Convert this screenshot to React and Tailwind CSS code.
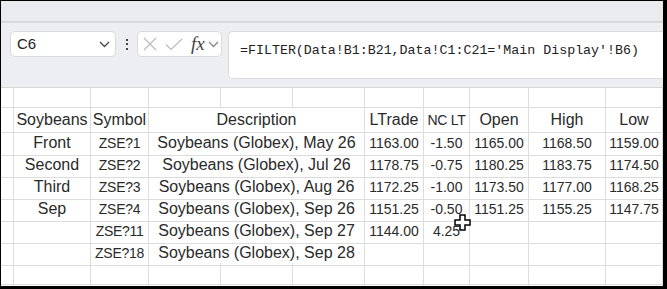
const cols = 'grid grid-cols-[13px_77px_58px_72px_72px_72px_59px_46px_59px_77px_57px]'
const cell = 'border-r border-b border-[#dcdcdc] flex items-center justify-center whitespace-nowrap overflow-visible'

const rows = [
    ['Front', 'ZSE?1', 'Soybeans (Globex), May 26', '1163.00', '-1.50', '1165.00', '1168.50', '1159.00'],
    ['Second', 'ZSE?2', 'Soybeans (Globex), Jul 26', '1178.75', '-0.75', '1180.25', '1183.75', '1174.50'],
    ['Third', 'ZSE?3', 'Soybeans (Globex), Aug 26', '1172.25', '-1.00', '1173.50', '1177.00', '1168.25'],
    ['Sep', 'ZSE?4', 'Soybeans (Globex), Sep 26', '1151.25', '-0.50', '1151.25', '1155.25', '1147.75'],
    ['', 'ZSE?11', 'Soybeans (Globex), Sep 27', '1144.00', '4.25', '', '', ''],
    ['', 'ZSE?18', 'Soybeans (Globex), Sep 28', '', '', '', '', ''],
]

const EmptyRow = ({ h }) => (
    <div className={`${cols} ${h}`}>
        {Array.from({ length: 11 }).map((_, i) => (
            <div key={i} className={cell} />
        ))}
    </div>
)

const Chevron = ({ color }) => (
    <svg width="11" height="7" viewBox="0 0 11 7">
        <polyline points="1,1 5.5,5.5 10,1" fill="none" stroke={color} strokeWidth="1.3" />
    </svg>
)

const App = () => {
    return (
        <div className="relative w-[667px] h-[289px] overflow-hidden bg-white border-black border-t border-l border-r-4 border-b-[3px] text-[#2a2a2a] font-['Liberation_Sans',Arial,sans-serif]">
            {/* top band */}
            <div className="h-[22px] bg-[#e9ebee] border-b-2 border-[#d7d9dc]" />

            {/* formula bar */}
            <div className="h-[64px] bg-[#eceef1] pl-[9px] pt-[8px] flex items-start">
                <div className="w-[106px] h-[26px] bg-white border border-[#d9dbde] rounded-[5px] flex items-center justify-between pl-[6px] pr-[5px]">
                    <span className="text-[15px] text-[#222]">C6</span>
                    <Chevron color="#444" />
                </div>
                <div className="w-[21px] h-[26px] flex flex-col items-center justify-center gap-[2.5px]">
                    <span className="w-[2px] h-[2px] bg-[#444]" />
                    <span className="w-[2px] h-[2px] bg-[#444]" />
                    <span className="w-[2px] h-[2px] bg-[#444]" />
                </div>
                <div className="w-[85px] h-[26px] bg-white border border-[#d9dbde] rounded-[5px] flex items-center pl-[5px]">
                    <svg width="14" height="14" viewBox="0 0 14 14">
                        <path d="M1 1 L13 13 M13 1 L1 13" stroke="#bcbcbc" strokeWidth="1.2" />
                    </svg>
                    <svg width="18" height="13" viewBox="0 0 18 13" className="ml-[8px]">
                        <polyline points="1,6.5 6,11.5 17,1" fill="none" stroke="#bcbcbc" strokeWidth="1.2" />
                    </svg>
                    <span className="ml-[8px] text-[19px] italic leading-none text-[#444] font-['Liberation_Serif',serif] mb-[2px]">fx</span>
                    <span className="ml-[3px]"><Chevron color="#888" /></span>
                </div>
                <div className="ml-[6px] flex-1 h-[48px] bg-white border border-r-0 border-[#d9dbde] rounded-l-[5px] pl-[11px] pt-[5px]">
                    <span className="text-[13.3px] leading-[16px] text-[#222] font-['Liberation_Mono',monospace] whitespace-nowrap">
                        =FILTER(Data!B1:B21,Data!C1:C21='Main Display'!B6)
                    </span>
                </div>
            </div>

            {/* sheet */}
            <div className="border-t border-[#d6d6d6]">
                <EmptyRow h="h-[20px]" />
                <div className={`${cols} h-[23px] text-[16px]`}>
                    <div className={cell} />
                    <div className={cell}>Soybeans</div>
                    <div className={cell}>Symbol</div>
                    <div className={`${cell} col-span-3`}>Description</div>
                    <div className={cell}>LTrade</div>
                    <div className={`${cell} text-[14px] tracking-[-0.3px]`}>NC LT</div>
                    <div className={cell}>Open</div>
                    <div className={cell}>High</div>
                    <div className={cell}>Low</div>
                </div>
                {rows.map((r, i) => (
                    <div key={i} className={`${cols} h-[22px]`}>
                        <div className={cell} />
                        <div className={`${cell} text-[16px]`}>{r[0]}</div>
                        <div className={`${cell} text-[14px] tracking-[-0.3px]`}>{r[1]}</div>
                        <div className={`${cell} col-span-3 text-[16px]`}>{r[2]}</div>
                        {r.slice(3).map((v, j) => (
                            <div key={j} className={`${cell} text-[14px]`}>{v}</div>
                        ))}
                    </div>
                ))}
                <EmptyRow h="h-[22px]" />
                <EmptyRow h="h-[22px]" />
            </div>

            {/* cell cursor */}
            <svg className="absolute left-[453px] top-[213px]" width="17" height="17" viewBox="0 0 17 17">
                <polygon points="6,1 11,1 11,6 16,6 16,11 11,11 11,16 6,16 6,11 1,11 1,6 6,6" fill="white" stroke="black" strokeWidth="1.5" />
            </svg>
        </div>
    )
}

export default App
